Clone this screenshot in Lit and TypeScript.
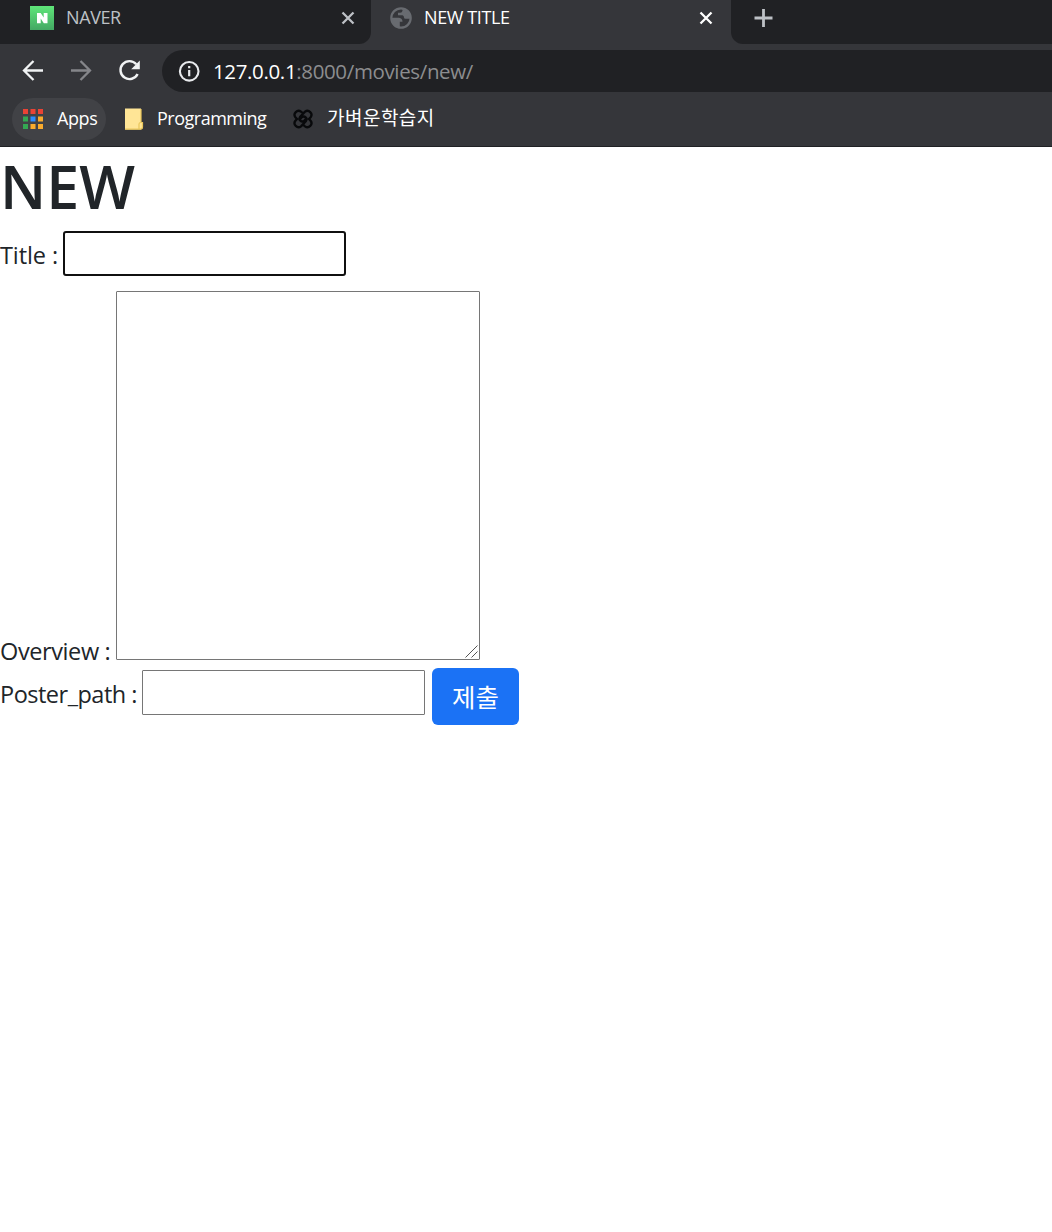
import { LitElement, html, css, svg } from "lit";
import { customElement } from "lit/decorators.js";

const closeIcon = html`<svg class="close" width="14" height="14" viewBox="0 0 14 14"><path d="M1.5 1.5 12.5 12.5M12.5 1.5 1.5 12.5" fill="none" stroke="currentColor" stroke-width="2.3"/></svg>`;

const appColors = ["#ea4335", "#ea4335", "#ea4335", "#34a853", "#2d8cff", "#f9ab2d", "#34a853", "#f9ab2d", "#f9ab2d"];

@customElement("browser-tabs")
class BrowserTabs extends LitElement {
  static styles = css`
    :host { display: flex; height: 44px; background: #35363a; font: 18px/24px "Open Sans", "Noto Sans CJK KR", sans-serif; }
    .tab { box-sizing: border-box; display: flex; height: 36px; align-items: center; }
    .idle { width: 371px; height: 44px; padding: 0 16px 8px 30px; background: #202124; color: #bdc1c6; border-bottom-right-radius: 12px; }
    .active { width: 360px; padding: 0 18px 0 18px; color: #fff; }
    .label { flex: 1; white-space: nowrap; padding-bottom: 2px; }
    .naver { margin-left: 12px; letter-spacing: -0.4px; }
    .new { margin-left: 11px; letter-spacing: -0.4px; }
    .rest { flex: 1; background: #202124; border-bottom-left-radius: 12px; padding: 9px 0 0 23px; box-sizing: border-box; }
    svg { display: block; }
  `;
  render() {
    return html`
      <div class="tab idle">
        <svg width="24" height="24" viewBox="0 0 24 24"><defs><linearGradient id="g" x2="0" y2="1"><stop stop-color="#5fe679"/><stop offset="1" stop-color="#43a863"/></linearGradient></defs><rect width="24" height="24" fill="url(#g)"/><path d="M7 7h3.700l3 4.600V7H17.500v10.300h-3.700l-3.100-4.700v4.700H7z" fill="#fff"/></svg>
        <span class="label naver">NAVER</span>${closeIcon}
      </div>
      <div class="tab active">
        <svg width="24" height="24" viewBox="0 0 24 24"><circle cx="12" cy="12" r="9.700" fill="none" stroke="#686b70" stroke-width="2.200"/><path d="M2.500 11.800h7.500q3.500.5 3.500 4h-2.700v5.700Q3.500 21 2.500 11.800zM13.500 2.500v2.300q-.3 2-2.300 2H9v2.500h4.500q1.500.3 1.500 2.200 0 1.300 1.500 1.300h5Q22 5 13.500 2.500z" fill="#686b70"/></svg>
        <span class="label new">NEW TITLE</span>${closeIcon}
      </div>
      <div class="rest"><svg width="19" height="18" viewBox="0 0 19 18"><path d="M9.500 0v18M.5 9h18" stroke="#bdc1c6" stroke-width="2.800" fill="none"/></svg></div>
    `;
  }
}

@customElement("browser-toolbar")
class BrowserToolbar extends LitElement {
  static styles = css`
    :host { display: flex; align-items: center; height: 42px; padding-top: 6px; background: #35363a; }
    .nav { display: flex; gap: 24px; width: 140px; padding-left: 22px; }
    svg { display: block; flex: none; }
    .address { flex: 1; height: 42px; border-radius: 21px 0 0 21px; background: #202124; display: flex; align-items: center; padding-left: 16px; font: 20.500px/30px "Open Sans", sans-serif; color: #8c8d8f; white-space: nowrap; }
    .address svg { margin-right: 1px; }
    .url { margin-left: 12px; letter-spacing: -0.360px; }
    .host { color: #fff; }
  `;
  render() {
    return html`
      <div class="nav">
        <svg width="24" height="24" viewBox="0 0 24 24" fill="none" stroke="#f1f3f4" stroke-width="2.300"><path d="M21 11.500H2.500M11.500 2 2 11.500l9.500 9.500"/></svg>
        <svg width="24" height="24" viewBox="0 0 24 24" fill="none" stroke="#85868a" stroke-width="2.300"><path d="M1 11.500h18.500M10.500 2 20 11.500 10.500 21"/></svg>
        <svg width="24" height="24" viewBox="0 0 24 24"><path d="M18.300 5.200A9 9 0 1 0 19.600 15" fill="none" stroke="#f1f3f4" stroke-width="2.400"/><path d="M21.800 1.600v8.600h-8.600z" fill="#f1f3f4"/></svg>
      </div>
      <div class="address">
        <svg width="22" height="22" viewBox="0 0 22 22"><circle cx="11.200" cy="11.300" r="9.300" fill="none" stroke="#e8eaed" stroke-width="2.100"/><path d="M11.200 9.900v6.400M11.200 6v2.200" stroke="#e8eaed" stroke-width="2.200"/></svg>
        <span class="url"><span class="host">127.0.0.1</span>:8000/movies/new/</span>
      </div>
    `;
  }
}

@customElement("bookmark-bar")
class BookmarkBar extends LitElement {
  static styles = css`
    :host { display: flex; box-sizing: border-box; height: 55px; padding: 6px 0 0 12px; border-bottom: 1px solid #202124; background: #35363a; color: #fff; font: 18px/42px "Open Sans", "Noto Sans CJK KR", sans-serif; white-space: nowrap; }
    .item { display: flex; align-items: center; height: 42px; }
    .item span { padding-bottom: 2px; }
    .apps { box-sizing: border-box; width: 94px; padding-left: 11px; border-radius: 21px; background: #414246; letter-spacing: -0.400px; }
    .apps span { margin-left: 14px; }
    .folder { box-sizing: border-box; width: 176px; padding-left: 18px; letter-spacing: -0.500px; }
    .folder span { margin-left: 13px; }
    .study { padding-left: 11px; font-size: 19px; letter-spacing: 0.480px; }
    .study span { margin-left: 14px; }
    svg { display: block; flex: none; }
  `;
  render() {
    return html`
      <div class="item apps">
        <svg width="20" height="20" viewBox="0 0 20 20">${appColors.map((c, i) => svg`<rect x=${(i % 3) * 7.5} y=${Math.floor(i / 3) * 7.5} width="5" height="5" fill=${c}/>`)}</svg>
        <span>Apps</span>
      </div>
      <div class="item folder">
        <svg width="20" height="22" viewBox="0 0 20 22"><path d="M1 .5h16v14h2v5l-2 2H1z" fill="#ffe596"/><path d="M1 21.200h16M15 20.500V16q0-1.500 2-1.500h1.500V19q0 2-2 2M17 1v13" fill="none" stroke="#e9c65b" stroke-width="1.200"/></svg>
        <span>Programming</span>
      </div>
      <div class="item study">
        <svg width="20" height="20" viewBox="0 0 20 20" fill="none" stroke="#08090b" stroke-width="2.300" stroke-linecap="round"><path d="M10 4.300 8 2.700A4 4 0 0 0 2.400 8.300L4 10l-1.600 1.700A4 4 0 0 0 8 17.300l5-5.300A2.900 2.900 0 0 0 9 8L6.500 10.700M10 15.700l2 1.600a4 4 0 0 0 5.600-5.600L16 10l1.600-1.700A4 4 0 0 0 12 2.700L7 8a2.900 2.900 0 0 0 4 4l2.500-2.700"/></svg>
        <span>가벼운학습지</span>
      </div>
    `;
  }
}

@customElement("movie-form")
class MovieForm extends LitElement {
  static styles = css`
    :host { display: block; color: #212529; font: 23.500px/36px "Open Sans", "Noto Sans CJK KR", sans-serif; white-space: nowrap; }
    h1 { margin: 0; padding: 3px 0 0; height: 80px; box-sizing: border-box; font-size: 59px; line-height: 72px; font-weight: 600; letter-spacing: 0; }
    .row { display: flex; }
    .row label { letter-spacing: -0.400px; flex: none; }
    input, textarea { box-sizing: border-box; display: block; margin: 0; background: #fff; border: 1px solid #767676; border-radius: 0; outline: none; font: inherit; }
    input { width: 283px; height: 45px; }
    .title { height: 60px; padding-top: 4px; }
    .title label { width: 63px; padding-top: 6px; letter-spacing: -0.100px; }
    .title input { border: 2px solid #101010; border-radius: 3px; }
    .overview { height: 377px; }
    .overview label { width: 116px; padding-top: 342px; }
    .area { position: relative; height: 369px; }
    .area svg { position: absolute; right: 2px; bottom: 2px; }
    textarea { width: 364px; height: 369px; border-radius: 1px; resize: none; }
    .poster label { width: 142px; padding-top: 8px; letter-spacing: -0.500px; }
    .poster input { margin-top: 2px; border-radius: 1px; }
    button { margin: 0 0 0 7px; width: 87px; height: 57px; padding: 0 0 2px; border: 0; border-radius: 6px; background: #1b72f5; color: #fff; font: 25.500px/55px "Noto Sans CJK KR", sans-serif; }
  `;
  render() {
    return html`
      <h1>NEW</h1>
      <div class="row title"><label for="t">Title :</label><input id="t" type="text" /></div>
      <div class="row overview"><label for="o">Overview :</label><div class="area"><textarea id="o"></textarea><svg width="13" height="13" viewBox="0 0 13 13"><path d="M.5 12.500 12.500.5M6.500 12.500l6-6" stroke="#555" fill="none"/></svg></div></div>
      <div class="row poster"><label for="p">Poster_path :</label><input id="p" type="text" /><button type="button">제출</button></div>
    `;
  }
}

@customElement("app-root")
class AppRoot extends LitElement {
  static styles = css`
    :host { display: block; height: 1232px; overflow: hidden; background: #fff; }
  `;
  render() {
    return html`<browser-tabs></browser-tabs><browser-toolbar></browser-toolbar><bookmark-bar></bookmark-bar><movie-form></movie-form>`;
  }
}
